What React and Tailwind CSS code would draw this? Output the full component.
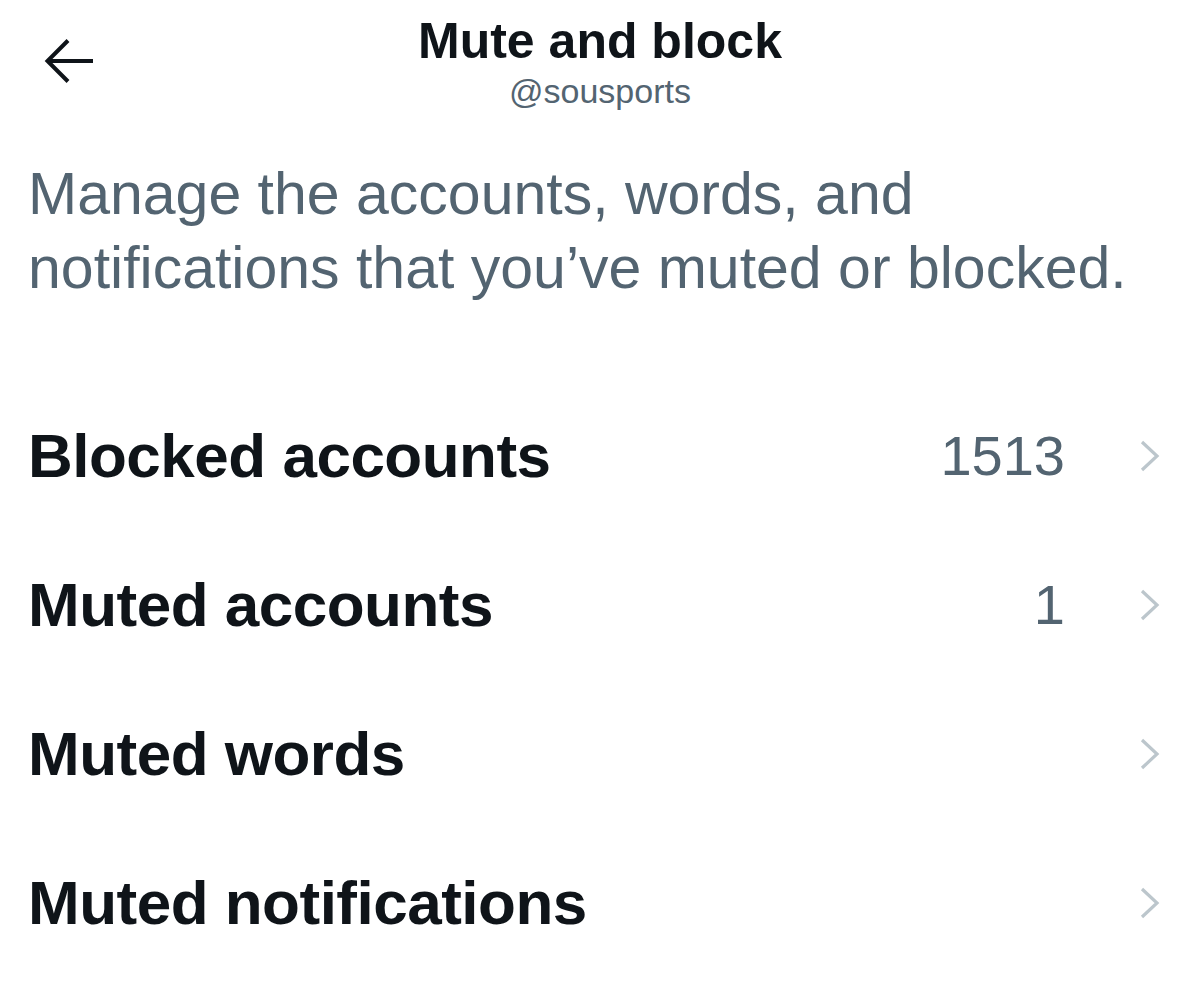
import React from 'react';

const rows = [
    { label: 'Blocked accounts', count: '1513' },
    { label: 'Muted accounts', count: '1' },
    { label: 'Muted words', count: '' },
    { label: 'Muted notifications', count: '' },
];

const BackArrow = () => (
    <svg width="50" height="44" viewBox="0 0 50 44" fill="none" stroke="#0f1419" strokeWidth="4" strokeLinecap="butt" strokeLinejoin="miter">
        <path d="M4 22 H49" />
        <path d="M24 1.5 L3.5 22 L24 42.5" />
    </svg>
);

const Chevron = () => (
    <svg width="20" height="32" viewBox="0 0 20 32" fill="none" stroke="#bcc6cc" strokeWidth="3.2">
        <path d="M2 2 L17 16 L2 30" />
    </svg>
);

const App = () => {
    return (
        <div className="w-[1200px] h-[988px] overflow-hidden bg-white font-['Liberation_Sans',Arial,sans-serif]">
            {/* Header */}
            <div className="grid grid-cols-[1fr_auto_1fr] h-[120px]">
                <div className="pl-[44px] pt-[39px]">
                    <BackArrow />
                </div>
                <div className="flex flex-col items-center pt-[16px]">
                    <h1 className="text-[50px] leading-none font-bold text-[#0f1419]">Mute and block</h1>
                    <p className="mt-[8px] text-[34px] leading-none text-[#536471]">@sousports</p>
                </div>
                <div />
            </div>

            {/* Description */}
            <p className="mt-[37px] px-[28px] text-[59px] leading-[74px] text-[#536471]">
                Manage the accounts, words, and<br />
                notifications that you’ve muted or blocked.
            </p>

            {/* Options */}
            <div className="mt-[76px]">
                {rows.map((row) => (
                    <div key={row.label} className="flex items-center h-[149px] pl-[28px] pr-[40px]">
                        <span className="flex-1 text-[62px] leading-none font-bold text-[#0f1419] tracking-[-0.5px]">{row.label}</span>
                        <span className="text-[56px] leading-none text-[#536471]">{row.count}</span>
                        <span className="ml-[75px] flex items-center">
                            <Chevron />
                        </span>
                    </div>
                ))}
            </div>
        </div>
    );
};

export default App;
